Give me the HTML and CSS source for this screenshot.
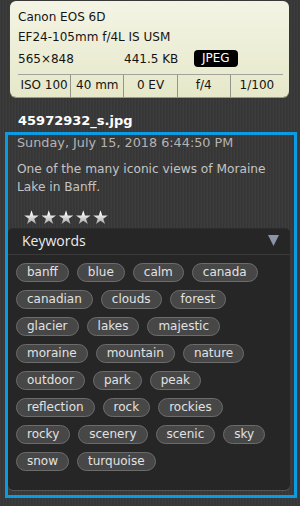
FILE: index.html
```html
<!DOCTYPE html>
<html>
<head>
<meta charset="utf-8">
<link rel="stylesheet" href="styles.css">
</head>
<body>
<div class="card">
  <div class="cline">Canon EOS 6D</div>
  <div class="cline">EF24-105mm f/4L IS USM</div>
  <div class="cline meta">
    <span class="dims">565×848</span>
    <span class="size">441.5 KB</span>
    <span class="badge">JPEG</span>
  </div>
  <div class="exif">
    <div class="cell">ISO 100</div>
    <div class="cell">40 mm</div>
    <div class="cell">0 EV</div>
    <div class="cell">f/4</div>
    <div class="cell">1/100</div>
  </div>
</div>
<div class="fname">45972932_s.jpg</div>
<div class="focus">
  <div class="date">Sunday, July 15, 2018 6:44:50 PM</div>
  <div class="desc">One of the many iconic views of Moraine Lake in Banff.</div>
  <div class="stars">★★★★★</div>
  <div class="panel">
    <div class="phead">
      <span class="ptitle">Keywords</span>
      <svg class="tri" width="11" height="11" viewBox="0 0 11 11"><polygon points="0,0 11,0 5.5,11" fill="#8a95a6"/></svg>
    </div>
    <div class="tags">
      <span class="tag">banff</span>
      <span class="tag">blue</span>
      <span class="tag">calm</span>
      <span class="tag">canada</span>
      <span class="tag">canadian</span>
      <span class="tag">clouds</span>
      <span class="tag">forest</span>
      <span class="tag">glacier</span>
      <span class="tag">lakes</span>
      <span class="tag">majestic</span>
      <span class="tag">moraine</span>
      <span class="tag">mountain</span>
      <span class="tag">nature</span>
      <span class="tag">outdoor</span>
      <span class="tag">park</span>
      <span class="tag">peak</span>
      <span class="tag">reflection</span>
      <span class="tag">rock</span>
      <span class="tag">rockies</span>
      <span class="tag">rocky</span>
      <span class="tag">scenery</span>
      <span class="tag">scenic</span>
      <span class="tag">sky</span>
      <span class="tag">snow</span>
      <span class="tag">turquoise</span>
    </div>
  </div>
</div>
</body>
</html>
```
FILE: styles.css
```css
html, body {
  margin: 0;
  padding: 0;
}
body {
  width: 300px;
  height: 506px;
  overflow: hidden;
  background-color: #383838;
  background-image: repeating-linear-gradient(90deg, rgba(255,255,255,0.025) 0 1px, rgba(0,0,0,0.04) 1px 2px, transparent 2px 3px);
  font-family: "DejaVu Sans", sans-serif;
}
.card {
  margin: 1px 11px 0 10px;
  height: 96px;
  box-sizing: border-box;
  padding: 6px 6px 0 8px;
  border-radius: 6px;
  background: linear-gradient(#f4f4e5, #e6e8c9);
  box-shadow: 0 1px 0 #9a9a88;
  font-size: 12px;
  color: #141414;
}
.cline {
  height: 20px;
  line-height: 20px;
}
.meta {
  display: flex;
  align-items: center;
  height: 23px;
}
.dims { width: 106px; }
.size { width: 70px; }
.badge {
  background: #000;
  color: #fff;
  border-radius: 4px;
  padding: 0 8px;
  line-height: 17px;
  font-size: 12px;
}
.exif {
  display: flex;
  margin-top: 4px;
  border-top: 1px solid #a4a49a;
  height: 22px;
}
.cell {
  flex: 1;
  text-align: center;
  line-height: 21px;
  border-left: 1px solid #95958c;
}
.cell:first-child { border-left: none; }
.fname {
  padding: 15px 0 0 18px;
  height: 20px;
  line-height: 17px;
  font-weight: bold;
  font-size: 13px;
  color: #fff;
}
.focus {
  margin-left: 5px;
  width: 292px;
  height: 366px;
  box-sizing: border-box;
  border: 3px solid #0b9be3;
}
.date {
  padding-left: 9px;
  font-size: 12.8px;
  line-height: 16px;
  color: #b4b4b4;
}
.desc {
  margin-top: 9px;
  padding: 0 12px 0 9px;
  font-size: 12.2px;
  line-height: 18px;
  color: #c4c4c4;
}
.stars {
  margin-top: 10px;
  margin-left: 15px;
  margin-bottom: 1px;
  font-size: 19px;
  line-height: 22px;
  letter-spacing: 0.2px;
  background: linear-gradient(#ffffff 30%, #a8a8a8 80%);
  -webkit-background-clip: text;
  background-clip: text;
  color: transparent;
  width: max-content;
}
.panel {
  margin: 0 4px 0 0;
  height: 261px;
  box-sizing: border-box;
  background: #262626;
  border-radius: 5px;
  box-shadow: 0 1px 0 #555, 0 -1px 0 #2c2c2c;
}
.phead {
  display: flex;
  justify-content: space-between;
  align-items: center;
  height: 26px;
  box-sizing: border-box;
  padding: 0 11px 2px 14px;
  border-bottom: 1px solid #3a3a3a;
  font-family: "Open Sans", sans-serif;
  font-size: 14px;
  color: #ececec;
}
.tags {
  display: flex;
  flex-wrap: wrap;
  gap: 8px 8px;
  padding: 8px 8px 0 8px;
}
.tag {
  height: 19px;
  box-sizing: border-box;
  line-height: 17px;
  padding: 0 10px;
  border: 1px solid #6c6c6c;
  border-radius: 10px;
  background: #474747;
  color: #e2e2e2;
  font-size: 12px;
}
```
